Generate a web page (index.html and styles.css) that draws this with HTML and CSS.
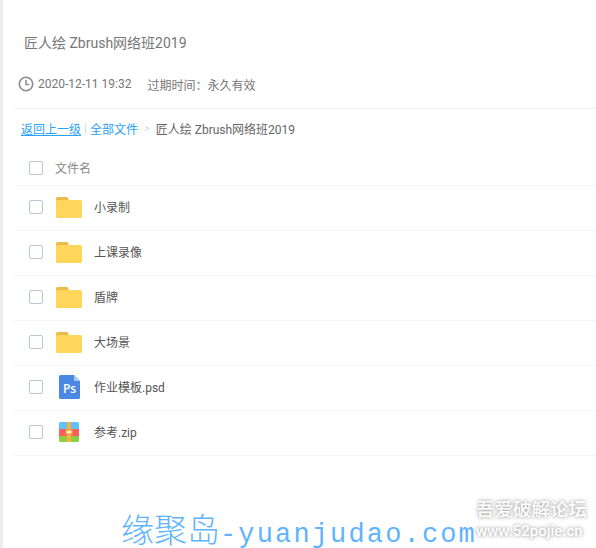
FILE: index.html
```html
<!DOCTYPE html>
<html lang="zh">
<head>
<meta charset="utf-8">
<title>匠人绘 Zbrush网络班2019</title>
<link rel="stylesheet" href="styles.css">
</head>
<body>
<div class="page">
  <h1 class="title">匠人绘 Zbrush网络班2019</h1>
  <div class="meta">
    <svg class="clock" width="16" height="16" viewBox="0 0 16 16"><circle cx="8" cy="8" r="6.7" fill="none" stroke="#8c8c8c" stroke-width="1.6"/><path d="M8 4v4.600h3.200" fill="none" stroke="#8c8c8c" stroke-width="1.500"/></svg>
    <span class="date">2020-12-11 19:32</span>
    <span>过期时间：永久有效</span>
  </div>
  <div class="crumbs">
    <a class="link under">返回上一级</a><span class="sep">|</span><a class="link">全部文件</a><span class="gt">&gt;</span><span class="cur">匠人绘 Zbrush网络班2019</span>
  </div>
  <div class="row head">
    <span class="check"></span>
    <span class="head-name">文件名</span>
  </div>
  <div class="row">
    <span class="check"></span>
    <span class="ico"><svg width="26" height="21" viewBox="0 0 26 21"><use href="#folder"/></svg></span>
    <span class="name">小录制</span>
  </div>
  <div class="row">
    <span class="check"></span>
    <span class="ico"><svg width="26" height="21" viewBox="0 0 26 21"><use href="#folder"/></svg></span>
    <span class="name">上课录像</span>
  </div>
  <div class="row">
    <span class="check"></span>
    <span class="ico"><svg width="26" height="21" viewBox="0 0 26 21"><use href="#folder"/></svg></span>
    <span class="name">盾牌</span>
  </div>
  <div class="row">
    <span class="check"></span>
    <span class="ico"><svg width="26" height="21" viewBox="0 0 26 21"><use href="#folder"/></svg></span>
    <span class="name">大场景</span>
  </div>
  <div class="row">
    <span class="check"></span>
    <span class="ico"><svg width="21" height="24" viewBox="0 0 21 24"><path d="M1.500 0H15L21 6V22.500A1.500 1.500 0 0 1 19.500 24H1.500A1.500 1.500 0 0 1 0 22.500V1.500A1.500 1.500 0 0 1 1.500 0Z" fill="#4a88e4"/><path d="M15 0L21 6H16.500A1.500 1.500 0 0 1 15 4.500Z" fill="#a9c8f3"/><text x="10.500" y="17.500" class="ps-text" text-anchor="middle">Ps</text></svg></span>
    <span class="name">作业模板.psd</span>
  </div>
  <div class="row">
    <span class="check"></span>
    <span class="ico"><svg width="20" height="20" viewBox="0 0 20 20"><path d="M1.500 0H18.500A1.500 1.500 0 0 1 20 1.500V7H0V1.500A1.500 1.500 0 0 1 1.500 0Z" fill="#5cc4fb"/><rect y="7" width="20" height="7" fill="#fb5e5e"/><path d="M0 14H20V18.500A1.500 1.500 0 0 1 18.500 20H1.500A1.500 1.500 0 0 1 0 18.500Z" fill="#8ccf43"/><rect x="8" width="4" height="20" fill="#fdb03d"/><rect x="6.500" y="7.500" width="7" height="5" fill="#fdb03d"/><rect x="8" y="9" width="4" height="2" fill="#fff"/></svg></span>
    <span class="name">参考.zip</span>
  </div>
  <div class="blue-mark"><span class="blue-cn">缘聚岛</span><span class="blue-en">-yuanjudao.com</span></div>
  <div class="forum-mark">
    <div class="forum-cn">吾爱破解论坛</div>
    <div class="forum-en">www.52pojie.cn</div>
  </div>
</div>
<svg class="defs" width="0" height="0"><defs><g id="folder"><path d="M1.500 0H10.500Q12.500 0 12.500 2V5H0V1.500Q0 0 1.500 0Z" fill="#eebb4a"/><rect y="3" width="26" height="18" rx="1.500" fill="#ffd659"/></g></defs></svg>
</body>
</html>
```
FILE: styles.css
```css
html, body { margin: 0; padding: 0; }
body {
  width: 596px;
  height: 548px;
  overflow: hidden;
  background: #fff;
  font-family: Roboto, "Noto Sans CJK SC", sans-serif;
  color: #666;
}
.page {
  position: relative;
  box-sizing: border-box;
  width: 596px;
  height: 548px;
  border-left: 3px solid #ececec;
  padding-left: 10px;
  overflow: hidden;
}
.title {
  margin: 0;
  padding: 32px 0 0 11px;
  height: 22px;
  font-size: 14px;
  line-height: 22px;
  font-weight: 400;
  color: #777;
}
.meta {
  display: flex;
  align-items: center;
  height: 48px;
  padding: 6px 0 0 5px;
  font-size: 12px;
  color: #777;
  border-bottom: 1px solid #f2f2f2;
}
.clock { margin-right: 4px; }
.date { margin-right: 16px; }
.crumbs {
  display: flex;
  align-items: center;
  height: 42px;
  padding-left: 8px;
  padding-bottom: 4px;
  box-sizing: border-box;
  font-size: 12px;
  color: #666;
}
.link { color: #2aa1f5; }
.under { text-decoration: underline; }
.sep { color: #bcdcf5; margin: 0 3px; }
.gt { color: #cfd6e4; margin: 0 6px 0 6px; font-size: 11px; }
.row {
  display: flex;
  align-items: center;
  box-sizing: border-box;
  height: 45px;
  padding-bottom: 2px;
  border-bottom: 1px solid #f2f5fa;
  font-size: 12px;
  color: #555;
}
.head {
  height: 35px;
  padding-bottom: 0;
  color: #888;
}
.check {
  box-sizing: border-box;
  width: 14px;
  height: 14px;
  margin-left: 16px;
  border: 1px solid #b9c6d3;
  border-radius: 2px;
  flex: none;
}
.head-name { margin: 0 0 2px 12px; }
.ico {
  flex: none;
  display: flex;
  align-items: center;
  justify-content: center;
  width: 26px;
  height: 30px;
  margin-left: 13px;
  margin-right: 12px;
}
.ps-text {
  font-family: "Open Sans", sans-serif;
  font-size: 12px;
  font-weight: 600;
  fill: #fff;
}
.name { color: #555; margin-bottom: 2px; }
.defs { position: absolute; }
.blue-mark {
  position: absolute;
  left: 118px;
  top: 508px;
  height: 40px;
  display: flex;
  align-items: baseline;
  white-space: nowrap;
  color: #5fb4ff;
}
.blue-cn {
  font-family: "Noto Sans CJK SC", sans-serif;
  font-size: 33px;
  line-height: 40px;
  font-weight: 300;
}
.blue-en {
  font-family: "Liberation Mono", monospace;
  font-size: 27px;
  line-height: 40px;
  letter-spacing: 2.150px;
}
.forum-mark {
  position: absolute;
  left: 473px;
  top: 499px;
  color: #fff;
  font-weight: 500;
  text-shadow: 0 0 3px #aaa, 0 0 5px #bbb;
  white-space: nowrap;
}
.forum-cn { font-size: 18.500px; line-height: 22px; }
.forum-en { font-size: 15px; line-height: 20px; }
```
